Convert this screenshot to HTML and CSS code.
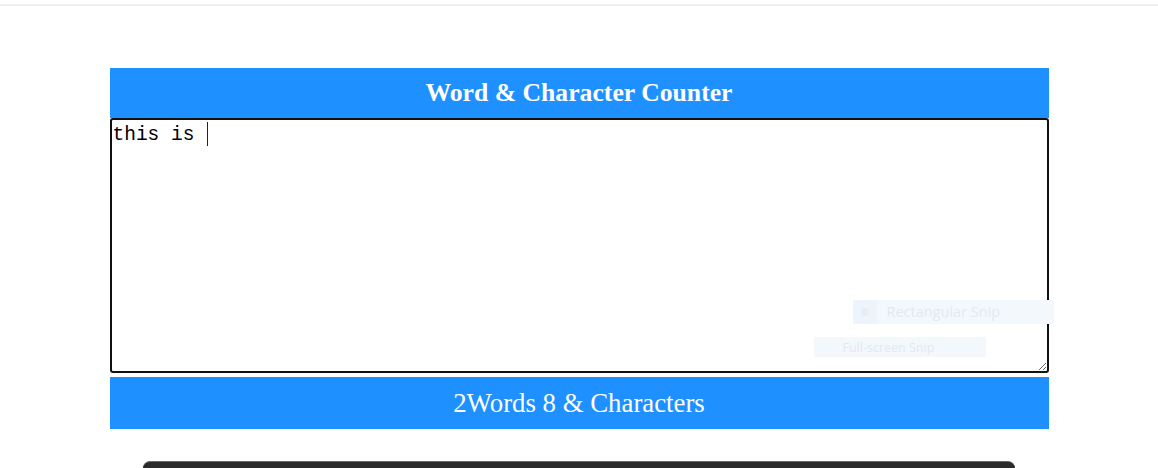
FILE: index.html
```html
<!DOCTYPE html>
<html>
<head>
<meta charset="utf-8">
<link rel="stylesheet" href="styles.css">
</head>
<body>
<div class="topline"></div>
<main class="counter">
  <h1 class="title">Word &amp; Character Counter</h1>
  <div class="editor">
    <textarea class="input">this is </textarea>
    <span class="caret"></span>
    <div class="snip snip-rect"><span class="dot"></span>Rectangular Snip</div>
    <div class="snip snip-full">Full-screen Snip</div>
  </div>
  <div class="result">2Words 8 &amp; Characters</div>
</main>
<div class="dark-panel"></div>
</body>
</html>
```
FILE: styles.css
```css
html, body {
  margin: 0;
  padding: 0;
  background: #ffffff;
  overflow: hidden;
}
body {
  font-family: "Liberation Serif", "Times New Roman", serif;
  height: 468px;
}
.topline {
  margin-top: 4px;
  height: 2px;
  background: #efeff1;
}
.counter {
  width: 939px;
  margin: 62px auto 0;
}
.title {
  margin: 0;
  height: 50px;
  background: #1e90ff;
  color: #ffffff;
  font-size: 25.7px;
  font-weight: bold;
  line-height: 50px;
  text-align: center;
}
.editor {
  position: relative;
  height: 259px;
}
.input {
  display: block;
  box-sizing: border-box;
  width: 939px;
  height: 255px;
  margin: 0;
  padding: 2px 1px;
  border: 2px solid #111111;
  border-radius: 3px;
  font-family: "Liberation Mono", "DejaVu Sans Mono", monospace;
  font-size: 19.5px;
  line-height: 26px;
  color: #000000;
  background: #ffffff;
  outline: none;
  resize: vertical;
}
.caret {
  position: absolute;
  left: 97px;
  top: 4px;
  width: 1px;
  height: 24px;
  background: #222222;
}
.snip {
  position: absolute;
  background: #f3f8fd;
  color: #e3e8ef;
  font-family: "Open Sans", "Liberation Sans", sans-serif;
  white-space: nowrap;
}
.snip-rect {
  left: 743px;
  top: 182px;
  width: 201px;
  height: 24px;
  line-height: 24px;
  font-size: 14.5px;
  box-sizing: border-box;
  padding-left: 34px;
}
.snip-rect .dot {
  position: absolute;
  left: 8px;
  top: 8px;
  width: 8px;
  height: 8px;
  border-radius: 50%;
  background: #e8edf3;
  z-index: 1;
}
.snip-rect::before {
  content: "";
  position: absolute;
  left: 0;
  top: 0;
  width: 24px;
  height: 24px;
  background: #eef4fb;
}
.snip-full {
  left: 704px;
  top: 219px;
  width: 172px;
  height: 20px;
  line-height: 21px;
  font-size: 12.5px;
  box-sizing: border-box;
  padding-left: 29px;
}
.result {
  height: 52px;
  background: #1e90ff;
  color: #ffffff;
  font-size: 26.8px;
  line-height: 52px;
  text-align: center;
}
.dark-panel {
  width: 872px;
  height: 6px;
  margin: 32px auto 0;
  background: #2b2b2b;
  border-radius: 9px 9px 0 0;
  border-top: 1px solid #6a6a6a;
}
```
